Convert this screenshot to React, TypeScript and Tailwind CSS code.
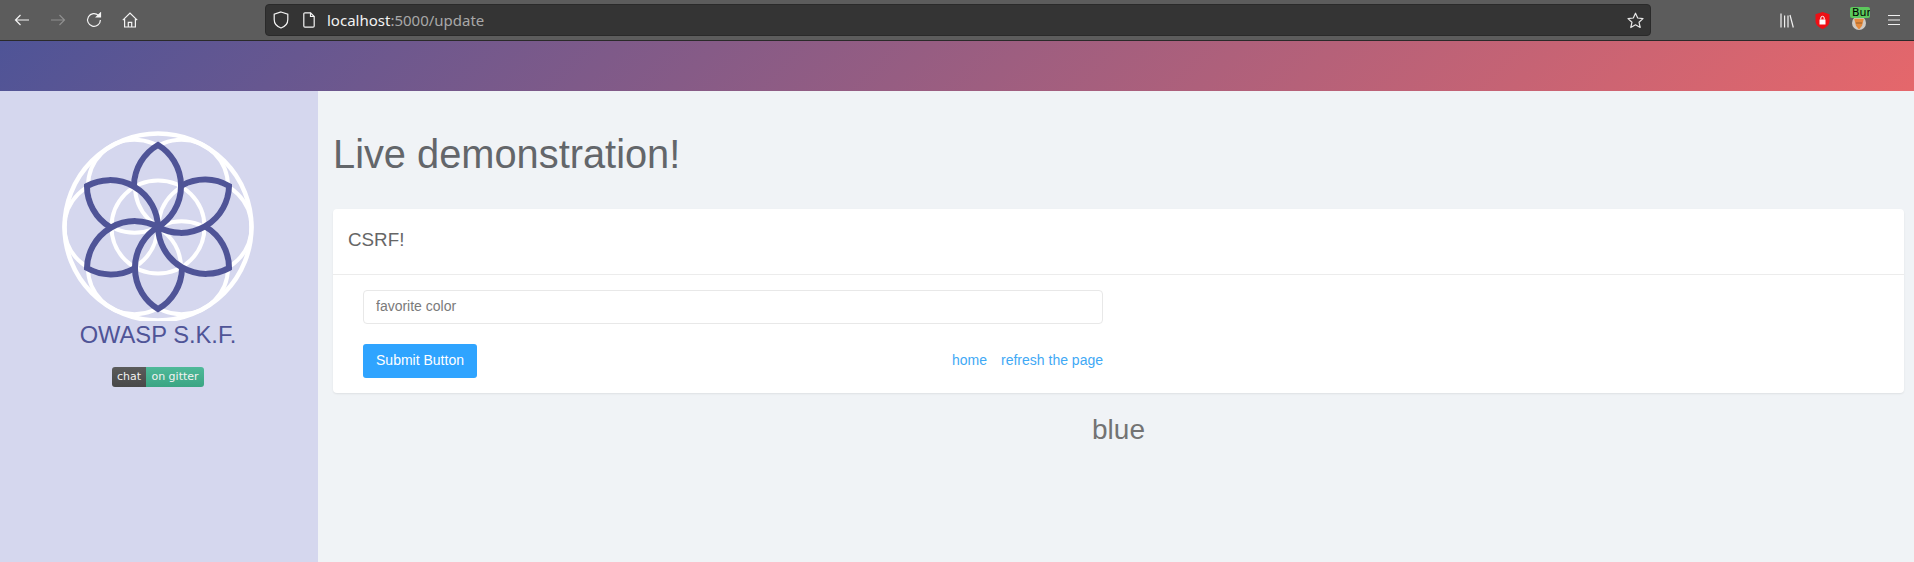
const petals = [0, 60, 120, 180, 240, 300];

function Logo() {
  const ring = 47;
  return (
    <svg width="200" height="194" viewBox="-100 -100 200 194" className="block">
      <g fill="none" stroke="#ffffff" strokeWidth="4">
        <circle r="93.5" strokeWidth="4.5" />
        <circle r="46.5" />
        {petals.map((a) => (
          <circle
            key={a}
            r="46.5"
            cx={ring * Math.cos((a * Math.PI) / 180)}
            cy={ring * Math.sin((a * Math.PI) / 180)}
          />
        ))}
      </g>
      <g fill="none" stroke="#4f5497" strokeWidth="6" strokeLinejoin="miter">
        {petals.map((a) => (
          <path
            key={a}
            transform={`rotate(${a})`}
            d="M-24 -41.57A48 48 0 0 1 0 -82A48 48 0 0 1 0 0"
          />
        ))}
      </g>
    </svg>
  );
}

function Back() {
  return (
    <svg width="16" height="16" viewBox="0 0 16 16" fill="none" stroke="currentColor" strokeWidth="1.2">
      <path d="M1.500 8H15M6.500 3 1.500 8 6.500 13" />
    </svg>
  );
}

function Forward() {
  return (
    <svg width="16" height="16" viewBox="0 0 16 16" fill="none" stroke="currentColor" strokeWidth="1.2">
      <path d="M14.500 8H1M9.500 3 14.500 8 9.500 13" />
    </svg>
  );
}

function Reload() {
  return (
    <svg width="16" height="16" viewBox="0 0 16 16" fill="none" stroke="currentColor" strokeWidth="1.2">
      <path d="M12.500 3.400A6.400 6.400 0 1 0 14.400 8" />
      <path d="M14.500 1V5H10.500Z" fill="currentColor" />
    </svg>
  );
}

function Home() {
  return (
    <svg width="16" height="16" viewBox="0 0 16 16" fill="none" stroke="currentColor" strokeWidth="1.2">
      <path d="M.8 8.200 8 1l7.200 7.200M2.600 7v8h10.800V7" />
      <path d="M6.300 15v-4.600h3.400V15" />
    </svg>
  );
}

function Shield() {
  return (
    <svg width="16" height="18" viewBox="0 0 16 18" fill="none" stroke="#f4f4f4" strokeWidth="1.200">
      <path d="M8 1 14.800 3.200V8.500C14.800 13 11.500 15.800 8 17 4.500 15.800 1.200 13 1.200 8.500V3.200Z" />
    </svg>
  );
}

function PageIcon() {
  return (
    <svg width="12" height="16" viewBox="0 0 12 16" fill="none" stroke="#f4f4f4" strokeWidth="1.200">
      <path d="M2 .8H7.500L11.200 4.500V14A1.200 1.200 0 0 1 10 15.200H2A1.200 1.200 0 0 1 .8 14V2A1.200 1.200 0 0 1 2 .8Z" />
      <path d="M7.500 .8V4.500H11.200" />
    </svg>
  );
}

function Star() {
  return (
    <svg width="17" height="17" viewBox="0 0 17 17" fill="none" stroke="#e8e8e8" strokeWidth="1.200" strokeLinejoin="round">
      <path d="M8.500 1.200 10.700 6 16 6.600 12 10.200 13.200 15.500 8.500 12.800 3.800 15.500 5 10.200 1 6.600 6.300 6Z" />
    </svg>
  );
}

function Library() {
  return (
    <svg width="14" height="15" viewBox="0 0 14 15" fill="none" stroke="#f0f0f0" strokeWidth="1.200">
      <path d="M1 .5V14.500M4.600 2.500V14.500M8 2.500V14.500M10 2 13.300 14.500" />
    </svg>
  );
}

function LockShield() {
  return (
    <svg width="15" height="17" viewBox="0 0 15 17">
      <path d="M7.500 0 14.500 2.300V9C14.500 13 11 15.500 7.500 17 4 15.500 .5 13 .5 9V2.300Z" fill="#ee0f15" />
      <rect x="4.500" y="7.500" width="6" height="5" fill="#ffffff" />
      <path d="M5.800 7.500V6A1.700 1.700 0 0 1 9.200 6V7.500" fill="none" stroke="#ffffff" strokeWidth="1" />
    </svg>
  );
}

function Fox() {
  return (
    <svg width="14" height="14" viewBox="0 0 16 16">
      <circle cx="8" cy="8" r="8" fill="#cfcac4" />
      <path d="M2.500 3H13.500L11.500 11 8 15.500 4.500 11Z" fill="#e58a3c" />
      <path d="M4.500 8H11.500" stroke="#8a5a2b" strokeWidth="1" />
    </svg>
  );
}

function Burp() {
  return (
    <div className="relative h-5 w-5">
      <div className="absolute left-[2px] top-[6px]">
        <Fox />
      </div>
      <div className="absolute left-0 top-[-3px] h-[11px] w-5 overflow-hidden whitespace-nowrap rounded-[2px] bg-[#5cc85c] pl-[2px] text-[11px] leading-[11px] text-black [font-family:'DejaVu_Sans',sans-serif]">
        Burp
      </div>
    </div>
  );
}

function Menu() {
  return (
    <svg width="14" height="12" viewBox="0 0 14 12" fill="none" stroke="#f0f0f0" strokeWidth="1.200">
      <path d="M1 1.500H13M1 6H13M1 10.500H13" />
    </svg>
  );
}

function Toolbar() {
  return (
    <div className="flex h-[41px] items-center border-b border-[#2a2a2a] bg-[#5c5c5c] text-[#f4f4f4]">
      <div className="flex w-[265px] items-center gap-5 pl-[14px]">
        <Back />
        <span className="text-[#8f8f8f]">
          <Forward />
        </span>
        <Reload />
        <Home />
      </div>
      <div className="flex h-8 w-[1386px] items-center rounded-[4px] border border-[#2a2a2a] bg-[#343434] pl-[7px] pr-[6px] [font-family:'Noto_Sans',sans-serif]">
        <Shield />
        <span className="ml-[14px]">
          <PageIcon />
        </span>
        <span className="ml-[12px] text-[15px] text-[#f2f2f2]">
          localhost<span className="text-[#a8a8a8]">:5000/update</span>
        </span>
        <span className="ml-auto">
          <Star />
        </span>
      </div>
      <div className="ml-auto flex items-center pr-[13px]">
        <Library />
        <span className="ml-[21px]">
          <LockShield />
        </span>
        <span className="ml-[20px]">
          <Burp />
        </span>
        <span className="ml-[17px]">
          <Menu />
        </span>
      </div>
    </div>
  );
}

function Sidebar() {
  return (
    <aside className="flex w-[318px] shrink-0 flex-col items-center bg-[#d5d7ee] pr-[2px] pt-[36px]">
      <Logo />
      <h2 className="text-[23.700px] leading-[28px] text-[#4f5497]">OWASP S.K.F.</h2>
      <div className="mt-[18px] flex h-5 w-[92px] overflow-hidden rounded-[3px] text-[11px] leading-5 text-[#f2f2f2] [font-family:'DejaVu_Sans',sans-serif]">
        <span className="w-[34px] bg-gradient-to-b from-[#5b5b5b] to-[#484848] text-center">chat</span>
        <span className="flex-1 bg-gradient-to-b from-[#4fb999] to-[#3aa583] text-center">on gitter</span>
      </div>
    </aside>
  );
}

export default function App() {
  return (
    <div className="flex h-[562px] w-[1914px] flex-col overflow-hidden bg-[#f0f3f6] [font-family:'Liberation_Sans',sans-serif]">
      <Toolbar />
      <div className="h-[50px] bg-[linear-gradient(135deg,#4f5497,#e5676b)]" />
      <div className="flex min-h-0 flex-1">
        <Sidebar />
        <main className="flex-1 pl-[15px] pr-[10px]">
          <h1 className="mt-[39px] text-[39.800px] leading-[48px] text-[#63666a]">Live demonstration!</h1>
          <section className="mt-[31px] rounded-[4px] bg-white shadow-[0_1px_2px_rgba(0,0,0,0.08)]">
            <header className="flex h-[66px] items-center border-b border-[#ececec] px-[15px] pb-[2px] text-[18.800px] text-[#666666]">
              CSRF!
            </header>
            <div className="w-[770px] pb-[15px] pl-[30px] pt-[15px]">
              <input
                placeholder="favorite color"
                className="block h-[34px] w-[740px] rounded-[4px] border border-[#e8e8e8] px-[12px] pb-[2px] text-[14px] text-[#666666] outline-none placeholder:text-[#7a7a7a]"
              />
              <div className="mt-[20px] flex items-center justify-between">
                <button className="h-[34px] w-[114px] rounded-[3px] bg-[#2fa4ff] pb-[2px] text-[14px] text-white">
                  Submit Button
                </button>
                <div className="flex gap-[14px] pb-[2px] text-[14px] text-[#3fa9f5]">
                  <a>home</a>
                  <a>refresh the page</a>
                </div>
              </div>
            </div>
          </section>
          <p className="mt-[21px] text-center text-[28px] leading-[32px] text-[#737373]">blue</p>
        </main>
      </div>
    </div>
  );
}
